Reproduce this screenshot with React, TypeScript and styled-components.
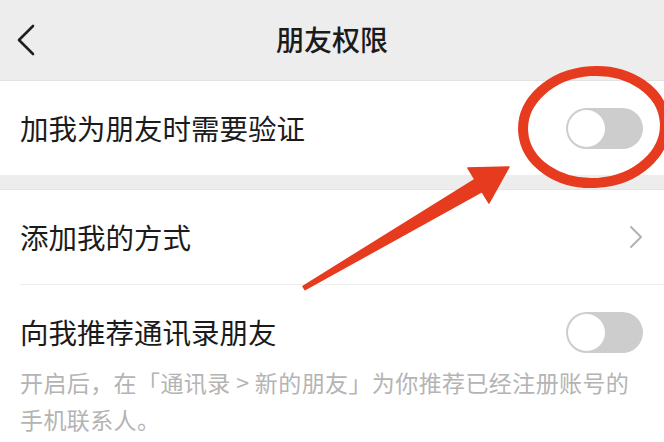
import styled, { createGlobalStyle } from "styled-components";

const GlobalStyle = createGlobalStyle`
  html, body {
    margin: 0;
    padding: 0;
    background: #ffffff;
  }
  body {
    font-family: "Noto Sans CJK SC", "Noto Sans", sans-serif;
    color: #1b1b1b;
  }
`;

const Page = styled.div`
  position: relative;
  width: 664px;
  height: 442px;
  overflow: hidden;
  background: #ffffff;
`;

const Header = styled.div`
  display: grid;
  grid-template-columns: 80px 1fr 80px;
  align-items: center;
  height: 80px;
  background: #ededed;
  border-bottom: 1px solid #e2e2e2;
`;

const BackButton = styled.div`
  display: flex;
  align-items: center;
  padding-left: 17px;
  height: 100%;
`;

const Title = styled.div`
  text-align: center;
  font-size: 28px;
  line-height: 1;
  font-weight: 500;
  color: #1b1b1b;
  padding-bottom: 2px;
`;

const Section = styled.div`
  background: #ffffff;
`;

const Gap = styled.div`
  height: 14px;
  background: #ededed;
  border-bottom: 1px solid #e4e4e4;
`;

const Row = styled.div<{ $height: number }>`
  display: flex;
  align-items: center;
  justify-content: space-between;
  height: ${(p) => p.$height}px;
  padding: 0 21px 0 20px;
`;

const Label = styled.span`
  font-size: 28.5px;
  line-height: 1;
  color: #1b1b1b;
`;

const Divider = styled.div`
  height: 1px;
  margin-left: 20px;
  background: #efefef;
`;

const Hint = styled.p`
  margin: -15px 0 0;
  padding: 0 24px 0 20px;
  font-size: 23px;
  letter-spacing: 0.4px;
  line-height: 37px;
  color: #b4b4b4;
`;

const Track = styled.div<{ $on?: boolean }>`
  display: flex;
  align-items: center;
  justify-content: ${(p) => (p.$on ? "flex-end" : "flex-start")};
  width: 77px;
  height: 41px;
  padding: 2px;
  box-sizing: border-box;
  border-radius: 21px;
  background: ${(p) => (p.$on ? "#07c160" : "#cdcdcd")};
`;

const Knob = styled.div`
  width: 37px;
  height: 37px;
  border-radius: 50%;
  background: #ffffff;
`;

const Overlay = styled.svg`
  position: absolute;
  left: 0;
  top: 0;
  pointer-events: none;
`;

const Switch = ({ on }: { on?: boolean }) => (
  <Track $on={on}>
    <Knob />
  </Track>
);

const App = () => {
  return (
    <>
      <GlobalStyle />
      <Page>
        <Header>
          <BackButton>
            <svg width="20" height="32" viewBox="0 0 20 32">
              <polyline points="16,2 2,16 16,30" fill="none" stroke="#1e1e1e" strokeWidth="2.6" strokeLinecap="round" strokeLinejoin="round" />
            </svg>
          </BackButton>
          <Title>朋友权限</Title>
          <div />
        </Header>

        <Section>
          <Row $height={94}>
            <Label>加我为朋友时需要验证</Label>
            <Switch />
          </Row>
        </Section>

        <Gap />

        <Section>
          <Row $height={94}>
            <Label>添加我的方式</Label>
            <svg width="14" height="24" viewBox="0 0 14 24">
              <polyline points="2,2 12,12 2,22" fill="none" stroke="#b2b2b2" strokeWidth="2" strokeLinecap="round" strokeLinejoin="round" />
            </svg>
          </Row>
          <Divider />
          <Row $height={94}>
            <Label>向我推荐通讯录朋友</Label>
            <Switch />
          </Row>
          <Hint>开启后，在「通讯录 &gt; 新的朋友」为你推荐已经注册账号的手机联系人。</Hint>
        </Section>

        {/* red annotation drawn over the screenshot */}
        <Overlay width="664" height="442" viewBox="0 0 664 442">
          <ellipse cx="594" cy="127" rx="71" ry="56" transform="rotate(-4 594 127)" fill="none" stroke="#e63b1e" strokeWidth="10" />
          <polygon
            points="303,286.3 475,179.5 468,168 509,167 489,203 482,191.5 305,289.7"
            fill="#e63b1e"
            stroke="#e63b1e"
            strokeWidth="1.5"
            strokeLinejoin="round"
          />
        </Overlay>
      </Page>
    </>
  );
};

export default App;
